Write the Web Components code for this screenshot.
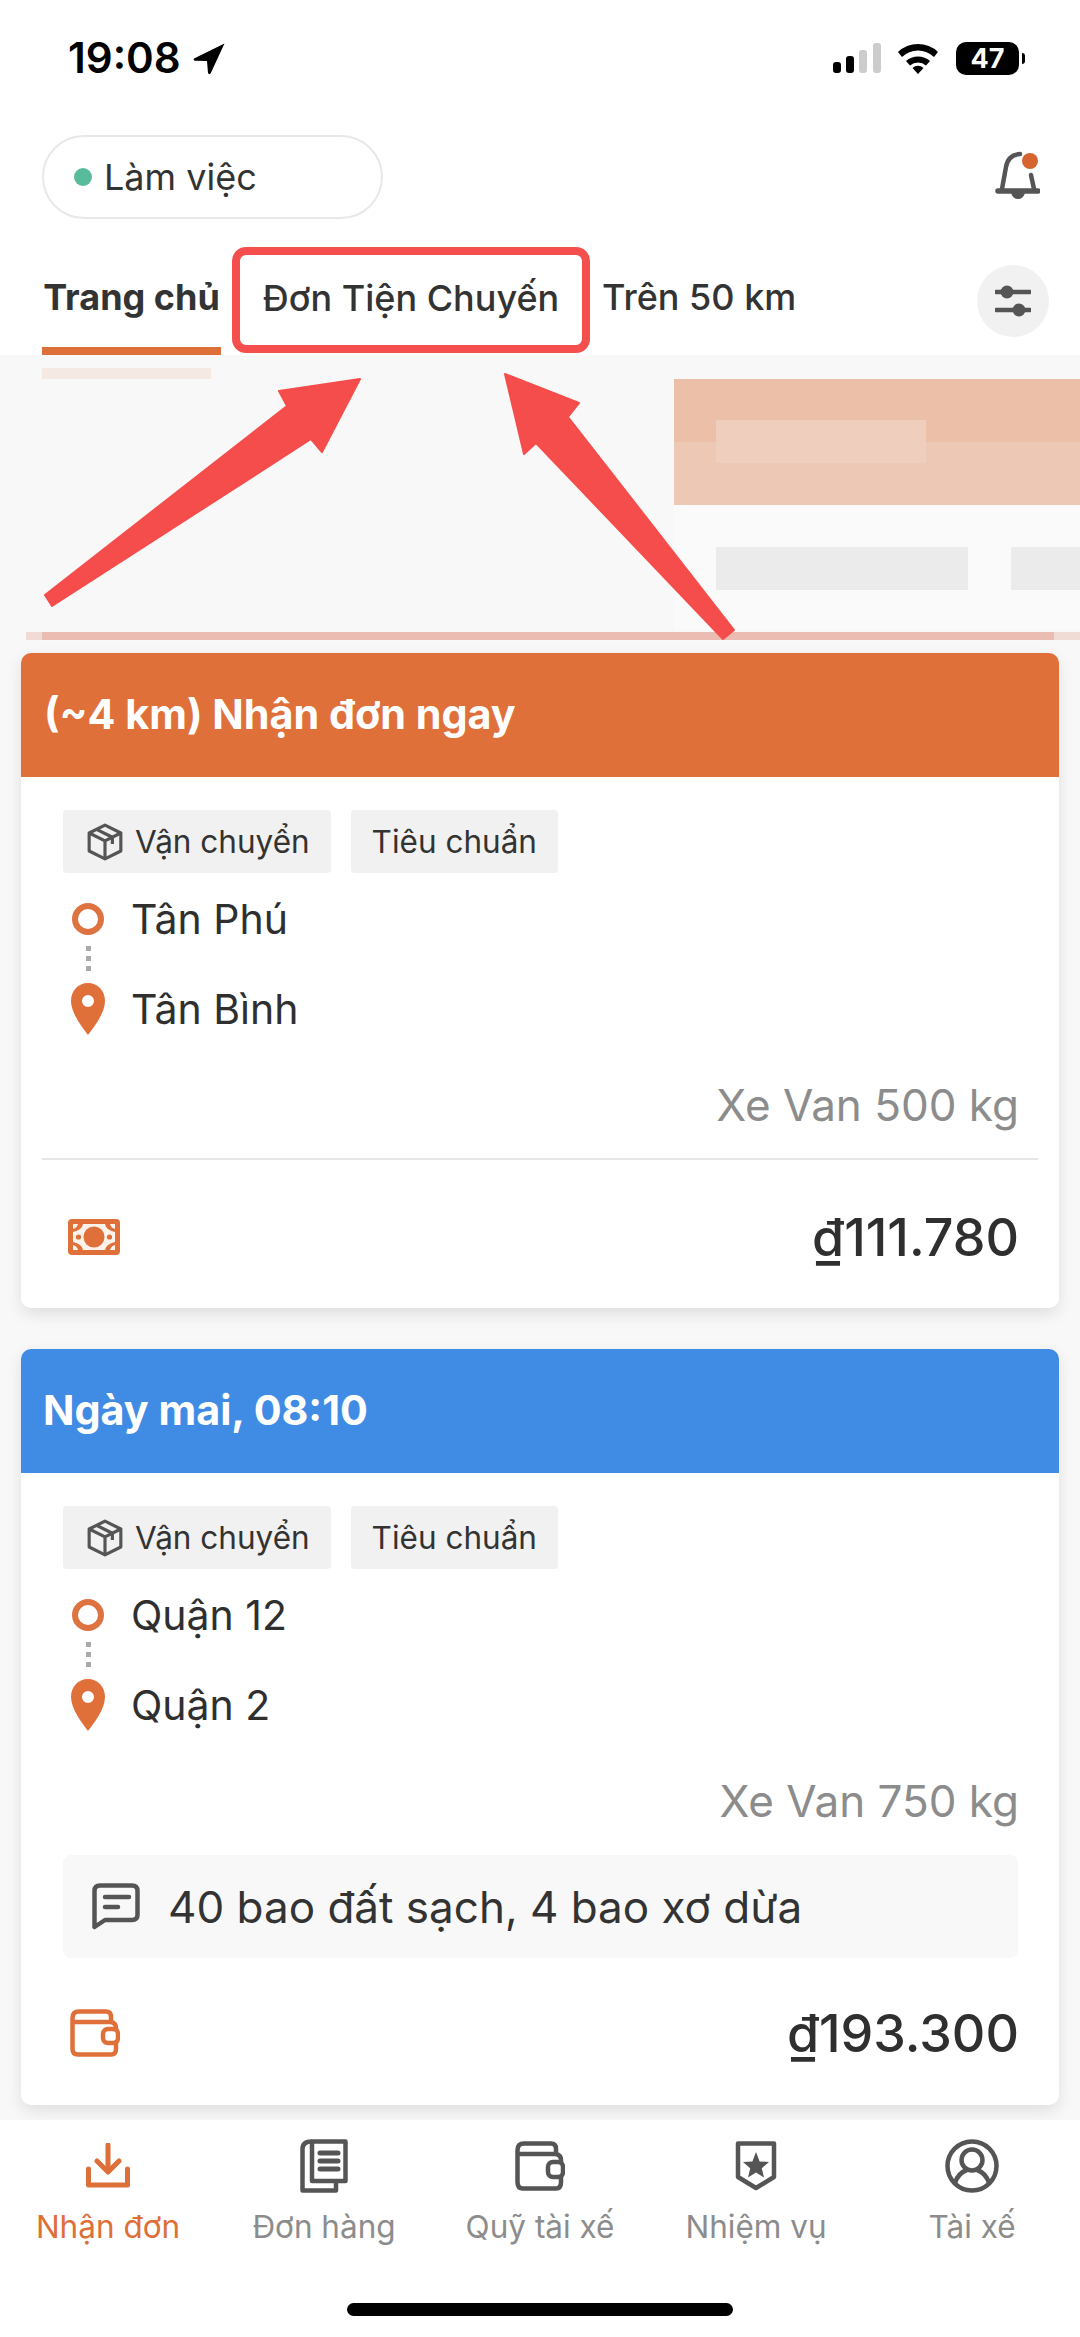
<!DOCTYPE html>
<html lang="vi">
<head>
<meta charset="utf-8">
<title>Nhận đơn</title>
<style>
  html, body { margin: 0; padding: 0; }
  body { width: 1080px; height: 2337px; overflow: hidden; background: #fff; font-family: Inter, "Noto Sans", sans-serif; color: #2f2f2f; }
  app-shell { height: 2337px; }
</style>
</head>
<body>
<app-shell>
  <status-bar slot="top"></status-bar>
  <top-bar slot="top"></top-bar>
  <tab-bar slot="top"></tab-bar>

  <promo-banner></promo-banner>

  <order-card tone="orange" title="(~4 km) Nhận đơn ngay" vehicle="Xe Van 500 kg" price="₫111.780" from="Tân Phú" to="Tân Bình" pay="cash"></order-card>
  <order-card tone="blue" title="Ngày mai, 08:10" vehicle="Xe Van 750 kg" price="₫193.300" from="Quận 12" to="Quận 2" pay="wallet" note="40 bao đất sạch, 4 bao xơ dừa"></order-card>

  <bottom-nav slot="bottom"></bottom-nav>
  <arrow-marks slot="over"></arrow-marks>
</app-shell>

<script>
const shell = document.createElement("template");
shell.innerHTML = /*html*/ `
  <style>
    :host { display: flex; flex-direction: column; position: relative; width: 1080px; overflow: hidden; }
    #content { flex: 1; min-height: 0; overflow: hidden; background: #f8f8f8; display: flex; flex-direction: column; }
  </style>
  <slot name="top"></slot>
  <div id="content"><slot></slot></div>
  <slot name="bottom"></slot>
  <slot name="over"></slot>
`;
class AppShell extends HTMLElement {
  constructor() {
    super();
    this.attachShadow({ mode: "open" });
    this.shadowRoot.appendChild(shell.content.cloneNode(true));
  }
}

const statusBar = document.createElement("template");
statusBar.innerHTML = /*html*/ `
  <style>
    :host { display: flex; align-items: center; justify-content: space-between; height: 116px; padding: 0 55px 0 68px; box-sizing: border-box; color: #000; }
    #left, #right { display: flex; align-items: center; }
    #time { font: 600 42px/1 Inter, sans-serif; letter-spacing: 0; }
    #left svg { margin-left: 12px; }
    #batt { width: 63px; height: 33px; margin: 0 0 0 17px; border-radius: 10px; background: #000; color: #fff; font: 700 27px/33px Inter, sans-serif; text-align: center; }
    #nub { width: 3px; height: 11px; margin-left: 3px; border-radius: 0 3px 3px 0; background: #000; }
    #wifi { margin-left: 16px; }
  </style>
  <div id="left">
    <span id="time">19:08</span>
    <svg width="33" height="33" viewBox="0 0 33 33"><path d="M31.5 1.5 L1 16.5 Q0 18.6 2 18.8 L14 19 L15 31 Q16 32.6 17.6 31.4 Z" fill="#000"/></svg>
  </div>
  <div id="right">
    <svg width="48" height="30" viewBox="0 0 48 30">
      <rect x="0" y="19" width="8" height="11" rx="3" fill="#000"/>
      <rect x="13" y="13" width="8" height="17" rx="3" fill="#000"/>
      <rect x="26" y="7" width="8" height="23" rx="3" fill="#ccc"/>
      <rect x="40" y="0" width="8" height="30" rx="3" fill="#ccc"/>
    </svg>
    <svg id="wifi" width="42" height="31" viewBox="0 0 42 31">
      <path d="M1 9 A29 29 0 0 1 41 9 L37 14 A23 23 0 0 0 5 14 Z" fill="#000"/>
      <path d="M9 18 A18 18 0 0 1 33 18 L29 22.5 A12 12 0 0 0 13 22.5 Z" fill="#000"/>
      <path d="M15.5 25 A8 8 0 0 1 26.5 25 L21 31 Z" fill="#000"/>
    </svg>
    <div id="batt">47</div>
    <div id="nub"></div>
  </div>
`;
class StatusBar extends HTMLElement {
  constructor() {
    super();
    this.attachShadow({ mode: "open" });
    this.shadowRoot.appendChild(statusBar.content.cloneNode(true));
  }
}

const topBar = document.createElement("template");
topBar.innerHTML = /*html*/ `
  <style>
    :host { display: flex; align-items: center; justify-content: space-between; height: 131px; padding: 20px 40px 29px 42px; box-sizing: border-box; }
    #pill { display: flex; align-items: center; width: 341px; height: 84px; box-sizing: border-box; padding-left: 30px; border: 2px solid #e8e8e8; border-radius: 42px; font: 400 36px/1 Inter, sans-serif; color: #333; }
    #dot { width: 18px; height: 18px; border-radius: 50%; background: #58bb9b; margin-right: 12px; }
  </style>
  <div id="pill"><span id="dot"></span>Làm việc</div>
  <svg width="46" height="52" viewBox="0 0 46 52">
    <path d="M26 3 Q14 4 12 16 L8 38" fill="none" stroke="#555" stroke-width="4.5" stroke-linecap="round"/>
    <path d="M37 24 L40 38" fill="none" stroke="#555" stroke-width="4.5" stroke-linecap="round"/>
    <path d="M4 40 H44" fill="none" stroke="#555" stroke-width="5.5" stroke-linecap="round"/>
    <path d="M17 42 H31 Q29 48 24 48 Q19 48 17 42 Z" fill="#555"/>
    <circle cx="36" cy="10" r="8" fill="#d5652e"/>
  </svg>
`;
class TopBar extends HTMLElement {
  constructor() {
    super();
    this.attachShadow({ mode: "open" });
    this.shadowRoot.appendChild(topBar.content.cloneNode(true));
  }
}

const tabBar = document.createElement("template");
tabBar.innerHTML = /*html*/ `
  <style>
    :host { display: flex; align-items: center; height: 108px; padding: 0 31px 0 42px; box-sizing: border-box; font: 500 36px/1 Inter, sans-serif; color: #333; }
    .tab { display: flex; align-items: center; height: 100%; box-sizing: border-box; white-space: nowrap; }
    #home { font-weight: 700; width: 179px; justify-content: center; border-bottom: 8px solid #dd7038; }
    #marked { margin-left: 11px; width: 358px; height: 106px; margin-bottom: 2px; padding-bottom: 4px; justify-content: center; border: 8px solid #f44f4d; border-radius: 14px; }
    #far { margin-left: 12px; padding-bottom: 8px; }
    #filter { margin-left: auto; width: 72px; height: 72px; border-radius: 50%; background: #f1f1f1; display: flex; align-items: center; justify-content: center; }
  </style>
  <div class="tab" id="home">Trang chủ</div>
  <div class="tab" id="marked">Đơn Tiện Chuyến</div>
  <div class="tab" id="far">Trên 50 km</div>
  <div id="filter">
    <svg width="36" height="34" viewBox="0 0 36 34">
      <path d="M1 8 H35 M1 26 H35" stroke="#555" stroke-width="4.5" stroke-linecap="round"/>
      <circle cx="12" cy="8" r="6.5" fill="#555"/>
      <circle cx="24" cy="26" r="6.5" fill="#555"/>
    </svg>
  </div>
`;
class TabBar extends HTMLElement {
  constructor() {
    super();
    this.attachShadow({ mode: "open" });
    this.shadowRoot.appendChild(tabBar.content.cloneNode(true));
  }
}

// the blurred promo picture, flat colour blocks drawn as background layers
const promo = document.createElement("template");
promo.innerHTML = /*html*/ `
  <style>
    :host {
      display: block; flex: none; height: 298px;
      background:
        linear-gradient(#f5e9e4, #f5e9e4) 42px 13px / 169px 11px no-repeat,
        linear-gradient(#efcebd, #efcebd) 716px 65px / 210px 43px no-repeat,
        linear-gradient(#ecc0a8, #ecc0a8) 674px 24px / 406px 63px no-repeat,
        linear-gradient(#edc8b4, #edc8b4) 674px 87px / 406px 63px no-repeat,
        linear-gradient(#ebebeb, #ebebeb) 716px 192px / 252px 43px no-repeat,
        linear-gradient(#ebebeb, #ebebeb) 1011px 192px / 69px 43px no-repeat,
        linear-gradient(#ebbdb2, #ebbdb2) 42px 277px / 1012px 8px no-repeat,
        linear-gradient(#f1dcd5, #f1dcd5) 26px 277px / 1054px 8px no-repeat,
        linear-gradient(#fafafa, #fafafa) 674px 150px / 406px 125px no-repeat;
    }
  </style>
`;
class PromoBanner extends HTMLElement {
  constructor() {
    super();
    this.attachShadow({ mode: "open" });
    this.shadowRoot.appendChild(promo.content.cloneNode(true));
  }
}

const payIcons = {
  cash: `<svg width="52" height="36" viewBox="0 0 52 36">
      <rect width="52" height="36" rx="4" fill="#e0703a"/>
      <path d="M15 5 H37 Q38 11 47 13 V23 Q38 25 37 31 H15 Q14 25 5 23 V13 Q14 11 15 5 Z" fill="#fdf3ea"/>
      <path d="M5 5 H10 Q9 9 5 10 Z M47 5 H42 Q43 9 47 10 Z M5 31 H10 Q9 27 5 26 Z M47 31 H42 Q43 27 47 26 Z" fill="#fdf3ea"/>
      <circle cx="26" cy="18" r="10.5" fill="#e0703a"/>
      <circle cx="10.5" cy="18" r="2.6" fill="#e0703a"/>
      <circle cx="41.5" cy="18" r="2.6" fill="#e0703a"/>
    </svg>`,
  wallet: `<svg width="50" height="48" viewBox="0 0 50 48" fill="none" stroke="#e0703a" stroke-width="4.5" stroke-linejoin="round">
      <path d="M9 2.5 H36 Q41 2.5 41 8 V13 Q46 14 46 19 V40 Q46 45.5 41 45.5 H8 Q2.5 45.5 2.5 40 V9 Q2.5 2.5 9 2.5 Z" stroke-linecap="round"/>
      <path d="M2.5 13 H41"/>
      <rect x="33" y="20" width="15" height="14" rx="5" fill="#fff"/>
    </svg>`,
};

const card = document.createElement("template");
card.innerHTML = /*html*/ `
  <style>
    :host { display: block; flex: none; margin: 0 21px 41px; background: #fff; border-radius: 10px; box-shadow: 0 6px 16px rgba(0,0,0,.1); font-family: Inter, sans-serif; color: #2f2f2f; }
    header { height: 124px; display: flex; align-items: center; padding: 0 23px; box-sizing: border-box; border-radius: 10px 10px 0 0; color: #fff; font: 700 41.3px/1 Inter, sans-serif; }
    :host([tone=orange]) header { background: #e0703a; }
    :host([tone=blue]) header { background: #408ce4; padding: 0 22px; }
    #tags { display: flex; gap: 20px; padding: 33px 42px 0; font-size: 31.5px; color: #333; }
    .tag { display: flex; align-items: center; height: 63px; padding: 0 21px; border-radius: 4px; background: #f1f1f1; }
    .tag svg { margin-right: 11px; margin-left: 2px; }
    #route { padding: 16px 42px 0; font-size: 41px; }
    .stop { display: flex; align-items: center; height: 60px; }
    .mark { width: 50px; margin-right: 18px; display: flex; justify-content: center; }
    #dots { width: 50px; height: 33px; margin-top: -3px; display: flex; flex-direction: column; gap: 5px; align-items: center; }
    #dots i { flex: none; width: 5px; height: 5px; background: #aaa; }
    #vehicle { height: 60px; margin-top: 36px; padding: 0 40px; display: flex; align-items: center; justify-content: flex-end; font-size: 44px; color: #8c8c8c; }
    #rule { height: 2px; margin: 23px 21px 0; background: #e6e6e6; }
    #note { display: flex; align-items: center; height: 103px; margin: 24px 41px 0 42px; padding-left: 29px; border-radius: 8px; background: #f8f8f8; font-size: 44px; color: #333; }
    #note svg { margin-right: 28px; }
    #foot { display: flex; align-items: center; justify-content: space-between; height: 100px; padding: 27px 40px 21px 47px; font-size: 52px; font-weight: 500; color: #2f2f2f; }
    :host([note]) #rule { display: none; }
    :host(:not([note])) #note { display: none; }
    :host([note]) #foot { padding: 25px 40px 22px 49px; }
  </style>
  <header id="title"></header>
  <div id="tags">
    <div class="tag">
      <svg width="38" height="38" viewBox="0 0 36 36" fill="none" stroke="#555" stroke-width="3" stroke-linejoin="round">
        <path d="M18 2 L33 9.5 V26.5 L18 34 L3 26.5 V9.5 Z"/>
        <path d="M3 9.5 L18 17 L33 9.5 M18 17 V34"/>
        <path d="M10 6 L25 13.5 V20"/>
      </svg>
      Vận chuyển
    </div>
    <div class="tag">Tiêu chuẩn</div>
  </div>
  <div id="route">
    <div class="stop">
      <div class="mark"><svg width="32" height="32" viewBox="0 0 32 32"><circle cx="16" cy="16" r="13" fill="none" stroke="#dd7340" stroke-width="6"/></svg></div>
      <span id="from"></span>
    </div>
    <div id="dots"><i></i><i></i><i></i></div>
    <div class="stop">
      <div class="mark"><svg width="34" height="52" viewBox="0 0 34 52"><path fill-rule="evenodd" d="M17 0 C7 0 0 8 0 18 C0 30 11 44 17 52 C23 44 34 30 34 18 C34 8 27 0 17 0 Z M17 12 A6 6 0 1 0 17 24 A6 6 0 1 0 17 12 Z" fill="#e0703a"/></svg></div>
      <span id="to"></span>
    </div>
  </div>
  <div id="vehicle"></div>
  <div id="rule"></div>
  <div id="note">
    <svg width="48" height="48" viewBox="0 0 48 48" fill="none" stroke="#555" stroke-width="4.5" stroke-linecap="round" stroke-linejoin="round">
      <path d="M2.5 44 V8 Q2.5 2.5 8 2.5 H40 Q45.5 2.5 45.5 8 V32 Q45.5 37 40 37 H13 Z"/>
      <path d="M13 14 H37 M13 24 H26"/>
    </svg>
    <span id="note-text"></span>
  </div>
  <div id="foot"><span id="pay" style="display:flex"></span><span id="price"></span></div>
`;
class OrderCard extends HTMLElement {
  constructor() {
    super();
    this.attachShadow({ mode: "open" });
    this.shadowRoot.appendChild(card.content.cloneNode(true));
  }

  static get observedAttributes() {
    return ["title", "vehicle", "price", "from", "to", "pay", "note"];
  }

  attributeChangedCallback(attrName, oldValue, newValue) {
    const root = this.shadowRoot;
    switch (attrName) {
      case "pay":
        root.getElementById("pay").innerHTML = payIcons[newValue];
        break;
      case "note":
        root.getElementById("note-text").textContent = newValue;
        break;
      default:
        root.getElementById(attrName).textContent = newValue;
    }
  }
}

const navItem = document.createElement("template");
navItem.innerHTML = /*html*/ `
  <style>
    :host { display: flex; flex-direction: column; align-items: center; flex: 1; color: #8c8c8c; font: 400 31.5px/1 Inter, sans-serif; }
    :host([active]) { color: #dd7038; }
    #icon { height: 56px; display: flex; align-items: center; margin-bottom: 17px; }
  </style>
  <div id="icon"><slot name="icon"></slot></div>
  <slot></slot>
`;
class NavItem extends HTMLElement {
  constructor() {
    super();
    this.attachShadow({ mode: "open" });
    this.shadowRoot.appendChild(navItem.content.cloneNode(true));
  }
}

const bottomNav = document.createElement("template");
bottomNav.innerHTML = /*html*/ `
  <style>
    :host { display: flex; flex-direction: column; flex: none; height: 217px; background: #fff; position: relative; }
    #items { display: flex; padding-top: 18px; }
    #home { width: 386px; height: 13px; margin: auto auto 21px; border-radius: 7px; background: #000; }
  </style>
  <div id="items">
    <nav-item active>
      <svg slot="icon" width="44" height="46" viewBox="0 0 44 46" fill="none" stroke="#dd7038" stroke-width="5" stroke-linecap="round" stroke-linejoin="round">
        <path d="M22 2 V28 M11 18 L22 29 L33 18"/>
        <path d="M2.5 26 V42 H41.5 V26"/>
      </svg>
      Nhận đơn
    </nav-item>
    <nav-item>
      <svg slot="icon" width="48" height="54" viewBox="0 0 48 54" fill="none" stroke="#555" stroke-width="4.5" stroke-linejoin="round">
        <path d="M12 2.5 H45.5 V42 H12 Z"/>
        <path d="M12 2.5 Q2.5 2.5 2.5 10 V51.5 H36 V42" />
        <path d="M20 14 H38 M20 22 H38 M20 30 H38" stroke-width="5" stroke-linecap="round"/>
      </svg>
      Đơn hàng
    </nav-item>
    <nav-item>
      <svg slot="icon" width="50" height="50" viewBox="0 0 50 50" fill="none" stroke="#555" stroke-width="4.5" stroke-linejoin="round">
        <path d="M9 2.5 H36 Q41 2.5 41 8 V13 Q46 14 46 19 V41 Q46 47.5 41 47.5 H8 Q2.5 47.5 2.5 41 V9 Q2.5 2.5 9 2.5 Z"/>
        <path d="M2.5 13 H41"/>
        <rect x="33" y="21" width="15" height="15" rx="5" fill="#fff"/>
      </svg>
      Quỹ tài xế
    </nav-item>
    <nav-item>
      <svg slot="icon" width="42" height="50" viewBox="0 0 42 50">
        <path d="M3 2.5 H39 V36 L21 47 L3 36 Z" fill="none" stroke="#555" stroke-width="4.5" stroke-linejoin="round"/>
        <path d="M21 11 L24.6 20.4 L34 21 L26.8 27.2 L29 36.6 L21 31.4 L13 36.6 L15.2 27.2 L8 21 L17.4 20.4 Z" fill="#555"/>
      </svg>
      Nhiệm vụ
    </nav-item>
    <nav-item>
      <svg slot="icon" width="54" height="54" viewBox="0 0 54 54" fill="none" stroke="#555" stroke-width="4.5">
        <circle cx="27" cy="27" r="24.5"/>
        <circle cx="27" cy="21" r="10.5"/>
        <path d="M10 44 Q13 34 22 31 M44 44 Q41 34 32 31"/>
      </svg>
      Tài xế
    </nav-item>
  </div>
  <div id="home"></div>
`;
class BottomNav extends HTMLElement {
  constructor() {
    super();
    this.attachShadow({ mode: "open" });
    this.shadowRoot.appendChild(bottomNav.content.cloneNode(true));
  }
}

// red annotation arrows drawn over the screenshot
const arrows = document.createElement("template");
arrows.innerHTML = /*html*/ `
  <style>
    :host { display: block; position: absolute; left: 0; top: 0; width: 1080px; height: 700px; pointer-events: none; }
  </style>
  <svg width="1080" height="700" viewBox="0 0 1080 700" fill="#f54d4b" stroke="#f54d4b" stroke-width="2" stroke-linejoin="round">
    <polygon points="45,595 287,406 279,391 360,379 322,452 311,439 52,606"/>
    <polygon points="505,374 579,403 568,417 734,630 723,639 536,443 524,454"/>
  </svg>
`;
class ArrowMarks extends HTMLElement {
  constructor() {
    super();
    this.attachShadow({ mode: "open" });
    this.shadowRoot.appendChild(arrows.content.cloneNode(true));
  }
}

window.customElements.define("app-shell", AppShell);
window.customElements.define("status-bar", StatusBar);
window.customElements.define("top-bar", TopBar);
window.customElements.define("tab-bar", TabBar);
window.customElements.define("promo-banner", PromoBanner);
window.customElements.define("order-card", OrderCard);
window.customElements.define("nav-item", NavItem);
window.customElements.define("bottom-nav", BottomNav);
window.customElements.define("arrow-marks", ArrowMarks);
</script>
</body>
</html>
